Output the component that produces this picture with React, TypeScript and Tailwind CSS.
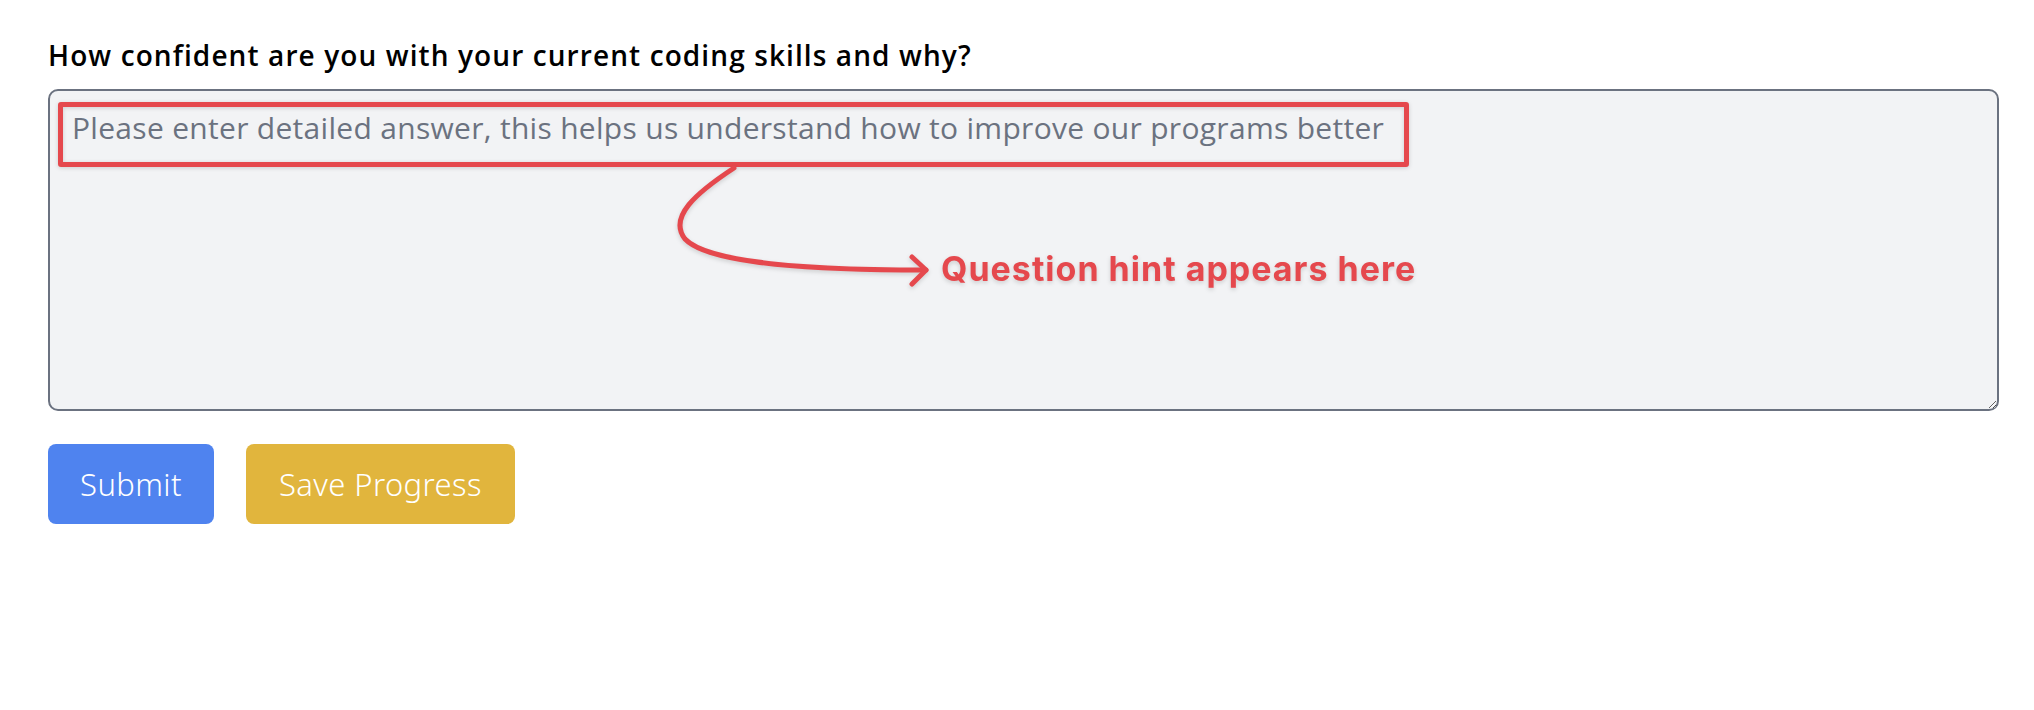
import { useState } from 'react';

export default function App() {
  const [answer, setAnswer] = useState('');

  return (
    <div className="min-h-screen bg-white pl-[48px] pt-[35px] font-['Open_Sans','Noto_Sans',sans-serif]">
      <label className="block text-[28px] font-semibold leading-[40px] tracking-[1.1px] text-black">
        How confident are you with your current coding skills and why?
      </label>

      <div className="relative mt-[14px] w-[1951px]">
        <textarea
          value={answer}
          onChange={(e) => setAnswer(e.target.value)}
          placeholder="Please enter detailed answer, this helps us understand how to improve our programs better"
          className="block h-[322px] w-full rounded-[10px] border-2 border-[#6b7280] bg-[#f2f3f5] px-[22px] py-[15px] text-[30px] leading-[44px] tracking-[0.3px] text-gray-800 outline-none placeholder:text-[#6b7280]"
        />

        {/* hint callout drawn over the field */}
        <div className="pointer-events-none absolute left-[10px] top-[13px] h-[65px] w-[1351px] rounded-[3px] border-[5px] border-[#e5484d] drop-shadow-[0_1px_2px_rgba(0,0,0,0.15)]" />
        <svg
          className="pointer-events-none absolute left-0 top-0 drop-shadow-[0_2px_2px_rgba(0,0,0,0.15)]"
          width="900"
          height="210"
          viewBox="0 0 900 210"
          fill="none"
        >
          <path
            d="M686 79 C 648 104 620 128 637 150 C 662 176 772 181 878 181"
            stroke="#e5484d"
            strokeWidth="5"
            strokeLinecap="round"
          />
          <path
            d="M864 168 L878 181 L864 195"
            stroke="#e5484d"
            strokeWidth="5"
            strokeLinecap="round"
            strokeLinejoin="round"
          />
        </svg>
        <span className="pointer-events-none absolute left-[893px] top-[158px] font-['Inter',sans-serif] text-[34px] font-bold leading-[44px] tracking-[1px] text-[#e5484d] drop-shadow-[0_2px_2px_rgba(0,0,0,0.15)]">
          Question hint appears here
        </span>
      </div>

      <div className="mt-[33px] flex gap-[32px] font-['Noto_Sans',sans-serif]">
        <button className="h-[80px] w-[166px] rounded-[8px] bg-[#4f83ef] text-[31px] font-light tracking-[0.4px] text-white">
          Submit
        </button>
        <button className="h-[80px] w-[269px] rounded-[8px] bg-[#e1b53d] text-[31px] font-light tracking-[0.4px] text-white">
          Save Progress
        </button>
      </div>
    </div>
  );
}
